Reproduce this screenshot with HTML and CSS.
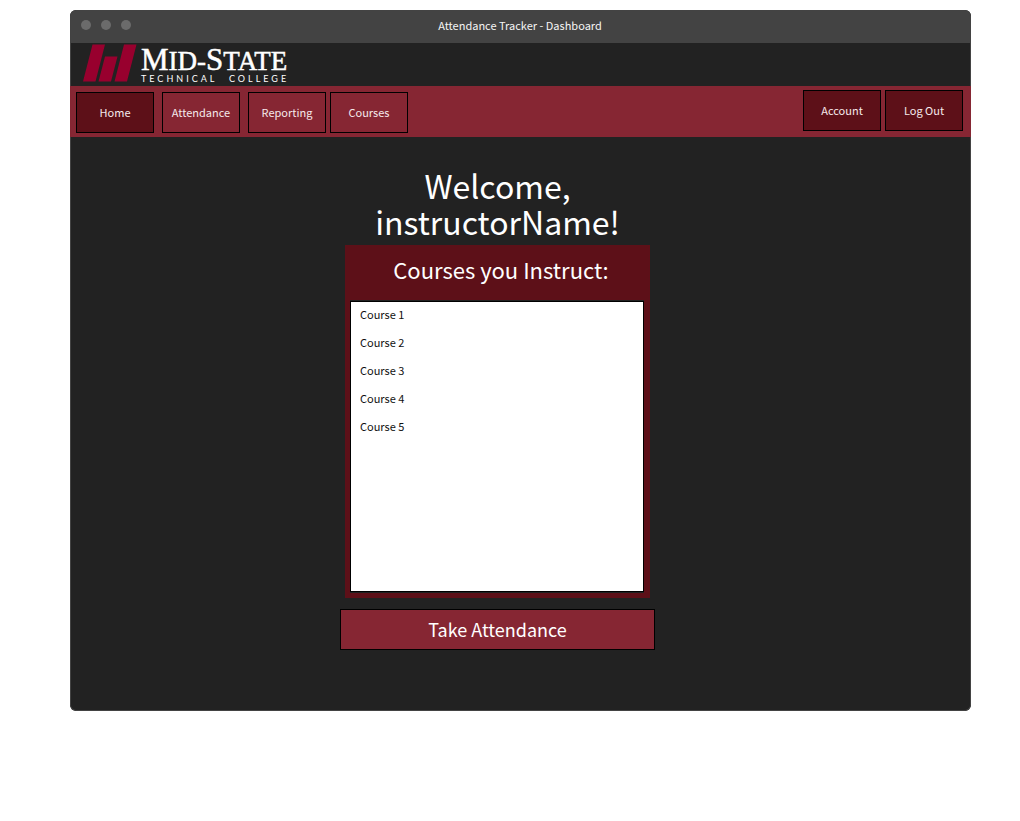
FILE: index.html
```html
<!DOCTYPE html>
<html lang="en">
<head>
<meta charset="utf-8">
<meta name="viewport" content="width=device-width, initial-scale=1">
<title>Attendance Tracker - Dashboard</title>
<link rel="stylesheet" href="styles.css">
</head>
<body>
<div class="window">
  <div class="titlebar">
    <div class="dots"><span class="dot"></span><span class="dot"></span><span class="dot"></span></div>
    <div class="title">Attendance Tracker - Dashboard</div>
  </div>
  <header class="brand">
    <svg class="brand-mark" width="54" height="38" viewBox="0 0 54 38" aria-hidden="true">
      <path fill="#98002e" d="M9.5 .5H22L12.500 37.500H0zM22 12.500H34.500L28 37.500H15.500zM41 .5H53.500L44 37.500H31.500z"/>
    </svg>
    <div class="brand-text">
      <div class="brand-name"><span class="cap">M</span>ID-<span class="cap">S</span>TATE</div>
      <div class="brand-sub"><span>TECHNICAL</span> <span>COLLEGE</span></div>
    </div>
  </header>
  <nav class="nav">
    <div class="nav-main">
      <button class="btn active" type="button">Home</button>
      <button class="btn" type="button">Attendance</button>
      <div class="nav-pair">
        <button class="btn" type="button">Reporting</button>
        <button class="btn" type="button">Courses</button>
      </div>
    </div>
    <div class="nav-user">
      <button class="btn active" type="button">Account</button>
      <button class="btn active" type="button">Log Out</button>
    </div>
  </nav>
  <main class="content">
    <h1 class="welcome">Welcome,<br>instructorName!</h1>
    <section class="panel">
      <h2 class="panel-title">Courses you Instruct:</h2>
      <ul class="courses">
        <li>Course 1</li>
        <li>Course 2</li>
        <li>Course 3</li>
        <li>Course 4</li>
        <li>Course 5</li>
      </ul>
    </section>
    <button class="btn take" type="button">Take Attendance</button>
  </main>
</div>
</body>
</html>
```
FILE: styles.css
```css
* { box-sizing: border-box; }

body {
  margin: 0;
  padding: 10px 49px 110px 70px;
  background: #fff;
  font-family: "Noto Sans CJK SC", "Noto Sans", sans-serif;
  font-size: 11px;
  line-height: 16px;
}

.window {
  border-radius: 6px;
  overflow: hidden;
  background: #222;
  color: #fff;
}

.titlebar {
  display: grid;
  grid-template-columns: 1fr auto 1fr;
  align-items: start;
  height: 33px;
  padding: 0 12px 0 11px;
  background: #434343;
}

.dots { display: flex; gap: 10px; padding-top: 10px; }
.dot { width: 10px; height: 10px; border-radius: 50%; background: #6b6b6b; }
.title { padding-top: 7px; color: #f5f5f5; }

.brand {
  display: flex;
  gap: 4px;
  height: 43px;
  padding: 1px 12px 0;
  border: solid #434343;
  border-width: 0 1px;
}

.brand-mark { flex: none; }

.brand-name {
  height: 29px;
  font: 27px/32px "Liberation Serif", serif;
  -webkit-text-stroke: 0.5px #fff;
}
.brand-name .cap { font-size: 31px; }

.brand-sub {
  display: flex;
  justify-content: space-between;
  margin-right: -2px;
  font: 9px/12px Lato, sans-serif;
  letter-spacing: 3px;
}

.nav {
  display: flex;
  justify-content: space-between;
  min-height: 51px;
  padding: 4px 8px 4px 6px;
  background: #862633;
}

.nav-main { display: flex; gap: 8px; padding-top: 2px; }
.nav-pair, .nav-user { display: flex; gap: 4px; }

.btn {
  width: 78px;
  height: 41px;
  padding: 0 0 2px;
  border: 1px solid #000;
  background: #862633;
  color: #f5e9eb;
  font: inherit;
  cursor: pointer;
}
.btn.active { background: #5d1018; }

.content {
  display: flex;
  flex-direction: column;
  align-items: center;
  padding: 30px 46px 60px 0;
  border: solid #434343;
  border-width: 0 1px 1px;
  border-radius: 0 0 6px 6px;
}

.welcome {
  margin: 0 0 6px;
  font-size: 32px;
  line-height: 36px;
  font-weight: 400;
  text-align: center;
}

.panel {
  width: 305px;
  max-width: 100%;
  padding: 8px 6px 6px 5px;
  background: #5d1018;
}

.panel-title {
  margin: 0 0 16px;
  padding-left: 8px;
  font-size: 22px;
  line-height: 32px;
  font-weight: 400;
  text-align: center;
}

.courses {
  min-height: 291px;
  margin: 0;
  padding: 0 9px;
  border: 1px solid #000;
  background: #fff;
  box-shadow: 0 1px #222, 0 -1px #222;
  color: #111;
  list-style: none;
}
.courses li { padding-bottom: 4px; line-height: 24px; }

.btn.take {
  width: 315px;
  max-width: 100%;
  margin-top: 11px;
  color: #fff;
  font-size: 18px;
}
```
